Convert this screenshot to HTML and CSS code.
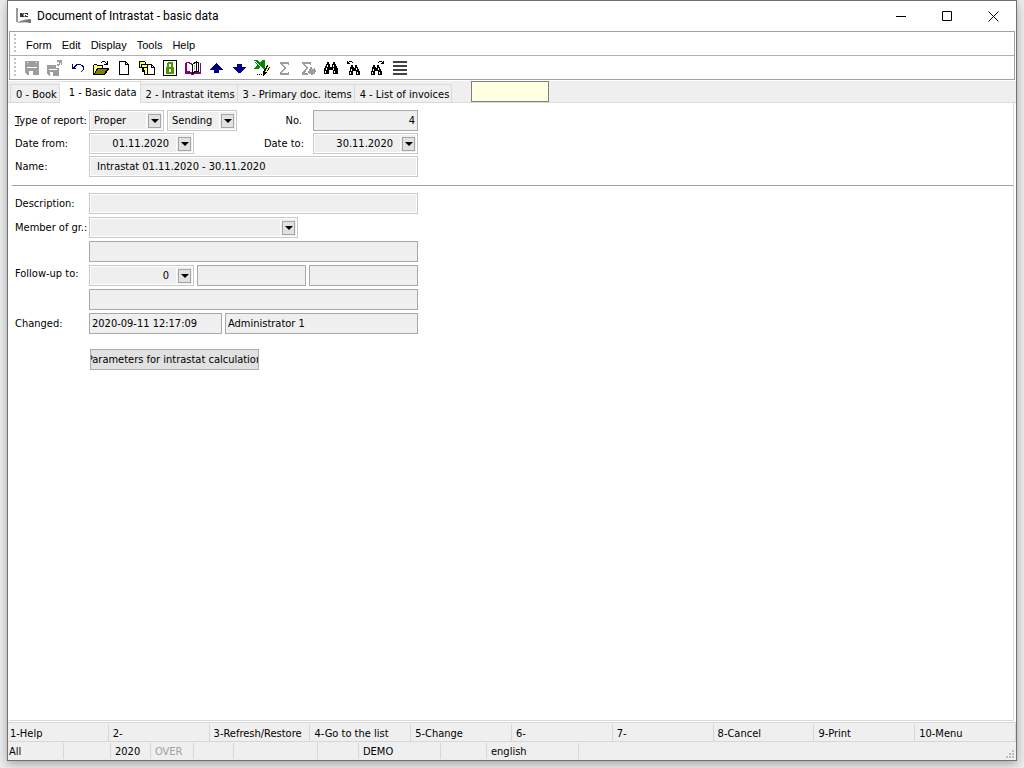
FILE: index.html
```html
<!DOCTYPE html>
<html lang="en">
<head>
<meta charset="utf-8">
<title>Document of Intrastat - basic data</title>
<link rel="stylesheet" href="styles.css">
</head>
<body>
<main class="window">
  <header class="titlebar">
    <svg class="app-icon" width="16" height="16" viewBox="0 0 16 16" aria-hidden="true">
      <defs><linearGradient id="shade" x1="0" y1="0" x2="1" y2="1"><stop offset="0" stop-color="#aaa"/><stop offset="1" stop-color="#555"/></linearGradient></defs>
      <path d="M0 0h2v14H0z" fill="#9a9a9a"/><path d="M1 15c4-3 9-4 14-4v4c-4-1-9-1-14 0z" fill="url(#shade)"/>
      <path d="M4 5h2v4H4zM7 5h2L7 7l2 2H7L5 7zM9 5h3v2h-2v1h2v1H9V7h2V6H9z" fill="#333"/>
    </svg>
    <h1 class="title">Document of Intrastat - basic data</h1>
    <div class="window-buttons">
      <button type="button" class="window-button" aria-label="Minimize"><svg width="11" height="11" viewBox="0 0 11 11"><path d="M0 5.500h10" stroke="#000" fill="none"/></svg></button>
      <button type="button" class="window-button" aria-label="Maximize"><svg width="11" height="11" viewBox="0 0 11 11"><path d="M.5.5h9v9h-9z" stroke="#000" fill="none"/></svg></button>
      <button type="button" class="window-button" aria-label="Close"><svg width="11" height="11" viewBox="0 0 11 11"><path d="M.5.5l10 10M10.500.5l-10 10" stroke="#000" fill="none"/></svg></button>
    </div>
  </header>

  <div class="bars">
    <nav class="menubar">
      <span class="grip"></span>
      <button type="button" class="menu">Form</button>
      <button type="button" class="menu">Edit</button>
      <button type="button" class="menu">Display</button>
      <button type="button" class="menu">Tools</button>
      <button type="button" class="menu">Help</button>
    </nav>
    <div class="toolbar">
      <span class="grip"></span>
      <button type="button" class="tool" aria-label="Save"><svg viewBox="0 0 16 16"><path d="M1 1h14v14H3l-2-2z" fill="#9d9d9d"/><path d="M3 7h10v1H3zM5 11h7v4H5zM3 2h1v1H3zM12 2h1v1h-1z" fill="#fff"/><path d="M9 11h3v4H9z" fill="#9d9d9d"/></svg></button>
      <button type="button" class="tool" aria-label="Save and close"><svg viewBox="0 0 16 16"><path d="M0 5h9v3h3v8H2l-2-2z" fill="#9d9d9d"/><path d="M2 9h8v1H2zM3 12h6v4H3z" fill="#fff"/><path d="M6 12h3v4H6z" fill="#9d9d9d"/><path d="M10 0h5v5h-1V3h-1v2h-1v1h-2V4h2V2h-2z" fill="#9d9d9d"/></svg></button>
      <button type="button" class="tool" aria-label="Undo"><svg viewBox="0 0 16 16"><path d="M2 4h1v3h1V6h1V5h1V4h5v1h2v1h1v4h-1v1h-1v1h-1v-1h1v-1h1V7h-1V6h-1V5H7v1H6v1H5v1h1v1H2z" fill="#000080"/></svg></button>
      <button type="button" class="tool" aria-label="Open"><svg viewBox="0 0 16 16"><path d="M0 5h1V4h3v1h6v3h6v1l-4 6H0z" fill="#000"/><path d="M1 5h3v1h5v2H4v1H3v2H2v2H1z" fill="#ffff66"/><path d="M5 9h9l-3 5H2z" fill="#808000"/><path d="M9 1h3v1h1v1h1V1h1v4h-4V4h2V3h-1V2H9v1H8V2h1z" fill="#000"/></svg></button>
      <button type="button" class="tool" aria-label="New"><svg viewBox="0 0 16 16"><path d="M3.500 1.500h6l3 3v10h-9zM9.500 1.500v3h3" fill="#fff" stroke="#000"/></svg></button>
      <button type="button" class="tool" aria-label="Copy"><svg viewBox="0 0 16 16"><path d="M.5 1.500h5l1 1v5h-6z" fill="#ffff66" stroke="#000"/><path d="M2.500 4.500h5l2 2v5h-6v-4h-1z" fill="#ffff66" stroke="#000"/><path d="M4.500 7.500h4v7h-3v-4h-1z" fill="#ffff66" stroke="#000"/><path d="M8.500 4.500h4l3 3v7h-7zM12.500 4.500v3h3" fill="#fff" stroke="#000"/></svg></button>
      <button type="button" class="tool" aria-label="Lock"><svg viewBox="0 0 16 16"><path d="M1.500.5h13v15h-13z" fill="#fff" stroke="#000"/><path d="M4 7h1V3l1-1h4l1 1v4h1v7H4z" fill="#4f9600"/><path d="M7 4h2v3H7zM7 9h2v3H7z" fill="#fff"/></svg></button>
      <button type="button" class="tool" aria-label="Book"><svg viewBox="0 0 16 16"><path d="M0 3h1v9h5v1h3v-1h6V3h1v11H9v1H6v-1H0z" fill="#800080"/><path d="M1.500 2.500h2l4 2v9l-3-2h-3z" fill="#fff" stroke="#800080"/><path d="M7.500 4.500l4-3v9l-4 3z" fill="#fff" stroke="#000"/><path d="M11.500 2.500h2v9h-2z" fill="#fff" stroke="#000"/><path d="M9 5h1v5H9z" fill="#b9b9b9"/></svg></button>
      <button type="button" class="tool" aria-label="Previous"><svg viewBox="0 0 16 16"><path d="M8 3l7 6v1h-4v3H6v-3H2V9z" fill="#000080"/></svg></button>
      <button type="button" class="tool" aria-label="Next"><svg viewBox="0 0 16 16"><path d="M6 4h5v3h4v1l-6 5H8L2 8V7h4z" fill="#000080"/></svg></button>
      <button type="button" class="tool" aria-label="Export to sheet"><svg viewBox="0 0 16 16"><path d="M0 0h4l2 3 2-3h3v9H8L6 7l-2 2H0l3-4z" fill="#008a00"/><path d="M1 1l8 8" stroke="#fff"/><path d="M9 12l4-7 3 2-4 7-3 2z" fill="#000"/><path d="M11 12l3-6 1 1-3 6z" fill="#ffff33"/><path d="M3 14h1v1H3zM5 14h1v1H5zM7 14h1v1H7z" fill="#000"/></svg></button>
      <button type="button" class="tool" aria-label="Sum"><svg viewBox="0 0 16 16"><path d="M3 2h9v3h-1V4H6l3 4-4 5h6v-1h1v3H3v-2l4-5-4-5z" fill="#9d9d9d"/></svg></button>
      <button type="button" class="tool" aria-label="Sum settings"><svg viewBox="0 0 16 16"><path d="M2 2h9v3h-1V4H5l3 4-3 5h3v2H2v-2l4-5-4-5zM10 7h2v2h2V8h1v2h1v2h-1v2h-2v1h-2v-1H9v-1H8v-2h1V9h1z" fill="#9d9d9d"/></svg></button>
      <button type="button" class="tool" aria-label="Find"><svg viewBox="0 0 16 16"><path d="M4 2h2v2h1v3h2V4h1V2h2v2h1v2h1v2h1v6h-5v-4H6v4H1V8h1V6h1V4h1z" fill="#000"/><path d="M4 5h1v2H4zM3 8h1v2H3zM2 11h1v2H2zM10 5h1v2h-1zM10 8h1v2h-1zM11 11h1v2h-1z" fill="#fff"/></svg></button>
      <button type="button" class="tool" aria-label="Find previous"><svg viewBox="0 0 16 16"><path d="M1 1h1v1h1V1h3v1h1v1H6V2H3v1h1v1H1zM5 5h2v2h1v1h1V5h2v2h1v2h1v2h1v4h-4v-4H7v4H3v-4h1V7h1z" fill="#000"/><path d="M5 9h1v2H5zM4 12h1v2H4zM10 8h1v2h-1zM11 12h1v2h-1z" fill="#fff"/></svg></button>
      <button type="button" class="tool" aria-label="Find next"><svg viewBox="0 0 16 16"><path d="M15 1h-1v1h-1V1h-3v1H9v1h1V2h3v1h-1v1h3zM4 5h2v2h1v1h1V5h2v2h1v2h1v2h1v4H9v-4H6v4H2v-4h1V7h1z" fill="#000"/><path d="M4 9h1v2H4zM3 12h1v2H3zM9 8h1v2H9zM10 12h1v2h-1z" fill="#fff"/></svg></button>
      <button type="button" class="tool" aria-label="List"><svg viewBox="0 0 16 16"><path d="M1 1h14v2H1zM1 5h14v2H1zM1 9h14v2H1zM1 13h14v2H1z" fill="#404040"/></svg></button>
    </div>
  </div>

  <div class="tabs">
    <button type="button" class="tab">0 - Book</button>
    <button type="button" class="tab tab-active">1 - Basic data</button>
    <button type="button" class="tab">2 - Intrastat items</button>
    <button type="button" class="tab">3 - Primary doc. items</button>
    <button type="button" class="tab">4 - List of invoices</button>
    <input class="quick" type="text" aria-label="Quick search">
  </div>

  <section class="page">
    <form class="form form-head">
      <div class="row">
        <label class="label" for="type"><u>T</u>ype of report:</label>
        <div class="fields">
          <div class="combo w-type"><select id="type"><option>Proper</option></select><span class="arrow"></span></div>
          <div class="combo w-direction"><select aria-label="Direction"><option>Sending</option></select><span class="arrow"></span></div>
          <label class="label-right label-no" for="number">No.</label>
          <input class="box box-dark number w-date" id="number" type="text" value="4" readonly>
        </div>
      </div>
      <div class="row">
        <label class="label" for="from">Date from:</label>
        <div class="fields">
          <div class="combo w-date"><input class="number" id="from" type="text" value="01.11.2020"><button type="button" class="arrow" aria-label="Pick start date"></button></div>
          <label class="label-right" for="to">Date to:</label>
          <div class="combo w-date"><input class="number" id="to" type="text" value="30.11.2020"><button type="button" class="arrow" aria-label="Pick end date"></button></div>
        </div>
      </div>
      <div class="row">
        <label class="label" for="name">Name:</label>
        <div class="fields"><input class="box indent" id="name" type="text" value="Intrastat 01.11.2020 - 30.11.2020"></div>
      </div>
    </form>
    <hr class="rule">
    <form class="form form-body">
      <div class="row">
        <label class="label" for="description">Description:</label>
        <div class="fields"><input class="box" id="description" type="text"></div>
      </div>
      <div class="row">
        <label class="label" for="member">Member of gr.:</label>
        <div class="fields"><div class="combo w-member"><select id="member"><option></option></select><span class="arrow"></span></div></div>
      </div>
      <div class="row">
        <span></span>
        <div class="fields"><input class="box box-dark" type="text" aria-label="Group name" readonly></div>
      </div>
      <div class="row">
        <label class="label label-up" for="follow">Follow-up to:</label>
        <div class="fields">
          <div class="combo w-date"><input class="number" id="follow" type="text" value="0"><button type="button" class="arrow" aria-label="Pick document"></button></div>
          <input class="box box-dark" type="text" aria-label="Follow-up from" readonly>
          <input class="box box-dark" type="text" aria-label="Follow-up until" readonly>
        </div>
      </div>
      <div class="row">
        <span></span>
        <div class="fields"><input class="box box-dark" type="text" aria-label="Follow-up name" readonly></div>
      </div>
      <div class="row">
        <label class="label" for="changed">Changed:</label>
        <div class="fields">
          <input class="box box-dark w-changed" id="changed" type="text" value="2020-09-11 12:17:09" readonly>
          <input class="box box-dark" type="text" value="Administrator 1" aria-label="Changed by" readonly>
        </div>
      </div>
      <button type="button" class="action"><span>Parameters for intrastat calculation</span></button>
    </form>
  </section>

  <nav class="keys">
    <button type="button" class="key">1-Help</button>
    <button type="button" class="key">2-</button>
    <button type="button" class="key">3-Refresh/Restore</button>
    <button type="button" class="key">4-Go to the list</button>
    <button type="button" class="key">5-Change</button>
    <button type="button" class="key">6-</button>
    <button type="button" class="key">7-</button>
    <button type="button" class="key">8-Cancel</button>
    <button type="button" class="key">9-Print</button>
    <button type="button" class="key">10-Menu</button>
  </nav>
  <footer class="status">
    <span>All</span><span></span><span>2020</span><span class="muted">OVER</span><span></span><span></span><span></span><span>DEMO</span><span></span><span>english</span>
    <svg class="size-grip" width="9" height="9" viewBox="0 0 9 9" aria-hidden="true"><path d="M6 0h2v2H6zM3 3h2v2H3zM6 3h2v2H6zM0 6h2v2H0zM3 6h2v2H3zM6 6h2v2H6z" fill="#bdbdbd"/></svg>
  </footer>
</main>
</body>
</html>
```
FILE: styles.css
```css
* { box-sizing: border-box; }

body {
  margin: 0;
  padding: 0 7px 7px;
  height: 100vh;
  background: #ececec;
  overflow: hidden;
  font-family: "DejaVu Sans Condensed", "DejaVu Sans", sans-serif;
  font-stretch: condensed;
  font-size: 11px;
  line-height: 14px;
  color: #000;
}

button, input, select {
  margin: 0;
  padding: 0;
  border: 0;
  border-radius: 0;
  background: none;
  font: inherit;
  color: inherit;
  white-space: nowrap;
}

.window {
  display: flex;
  flex-direction: column;
  height: 100%;
  border: 1px solid #707070;
  background: #fff;
  box-shadow: 0 3px 9px rgba(0, 0, 0, .3);
}

.titlebar {
  display: flex;
  align-items: center;
  height: 30px;
  padding-left: 8px;
}

.title {
  margin: 0 auto 0 5px;
  font: 12px/16px Roboto, "Open Sans", sans-serif;
}

.window-buttons { display: flex; }

.window-button {
  display: grid;
  place-items: center;
  width: 46px;
  height: 30px;
}

.bars {
  margin: 0 1px;
  border: 1px solid #a0a0a0;
}

.menubar, .toolbar {
  display: flex;
  align-items: center;
  height: 24px;
  padding-left: 4px;
}

.menubar {
  font-family: "Liberation Sans", Arial, sans-serif;
  font-size: 11px;
  border-bottom: 1px solid #b0b0b0;
}

.toolbar { height: 23px; }

.grip {
  width: 2px;
  height: 20px;
  margin-right: 5px;
  background: repeating-linear-gradient(#c4c4c4 0 2px, #fff 2px 4px);
}

.menu { padding: 2px 5px 0; }

.tool {
  width: 23px;
  height: 22px;
  display: grid;
  place-items: center;
}

.toolbar .grip { margin-right: 4px; }

.tool svg {
  width: 16px;
  height: 16px;
  shape-rendering: crispEdges;
}

.tabs {
  display: flex;
  align-items: flex-end;
  height: 22px;
  margin-top: 1px;
  padding-left: 2px;
  background: #efefef;
  box-shadow: inset 0 -1px #dadada;
}

.tab {
  height: 19px;
  padding: 2px 2px 0 5px;
  border: 1px solid #dadada;
  border-left: 0;
}

.tab:first-child { border-left: 1px solid #dadada; }

.tab-active {
  height: 22px;
  padding: 0 3px 0 9px;
  border-bottom: 0;
  background: #fff;
}

.quick {
  width: 78px;
  height: 21px;
  margin: 0 0 1px 19px;
  border: 1px solid #808080;
  background: #ffffe1;
}

.page {
  flex: 1;
  min-height: 0;
  margin: 0 2px 1px 1px;
  border: 1px solid #dadada;
  border-width: 0 1px 1px 0;
}

.form {
  display: grid;
  width: 409px;
  padding-left: 6px;
}

.form-head { gap: 2px; padding-top: 7px; }
.form-body { gap: 3px; padding-top: 7px; }

.row {
  display: grid;
  grid-template-columns: 74px 329px;
  height: 21px;
}

.label { padding-top: 4px; white-space: nowrap; }
.label-up { padding-top: 2px; }
.label-right { margin-left: auto; padding: 4px 6px 0 0; }

.fields { display: flex; gap: 3px; }

.box {
  flex: 1 1 0;
  min-width: 0;
  height: 21px;
  padding: 0 2px;
  border: 1px solid #c8c8c8;
  background: #efefef;
  box-shadow: inset 0 0 0 1px #fff;
}

.box-dark { border-color: #a7a9ad; box-shadow: none; }
.indent { padding-left: 7px; }
.number { text-align: right; }

.combo {
  position: relative;
  height: 21px;
  border: 1px solid #c8c8c8;
  background: #efefef;
  box-shadow: inset 0 0 0 1px #fff;
}

.combo select, .combo input {
  display: block;
  width: 100%;
  height: 19px;
  padding: 0 24px 0 4px;
  appearance: none;
}

.combo::before {
  content: "";
  position: absolute;
  top: 1px;
  bottom: 1px;
  right: 16px;
  width: 1px;
  background: #fff;
}

.arrow {
  position: absolute;
  top: 3px;
  right: 2px;
  width: 13px;
  height: 14px;
  border: 1px solid #a5a5a5;
  background: #e1e1e1;
  pointer-events: none;
}

.arrow::after {
  content: "";
  position: absolute;
  top: 4px;
  left: 2px;
  border: 4px solid transparent;
  border-width: 4px 4px 0;
  border-top-color: #000;
}

.w-type { width: 75px; }
.w-direction { width: 70px; }
.w-date { flex: none; width: 105px; }
.w-member { width: 209px; }
.w-changed { flex: none; width: 133px; }
.label-no { padding-right: 8px; }

.rule {
  height: 1px;
  margin: 8px 0 0 3px;
  border: 0;
  background: #a0a0a0;
}

.action {
  display: flex;
  justify-content: center;
  align-items: center;
  width: 169px;
  height: 21px;
  margin: 12px 0 0 75px;
  border: 1px solid #adadad;
  background: #e1e1e1;
}

.action span {
  display: flex;
  justify-content: center;
  width: 100%;
  overflow: hidden;
}

.keys {
  display: grid;
  grid-template-columns: repeat(10, 1fr);
  height: 20px;
  padding-top: 1px;
  border: 1px solid #d7d7d7;
  border-width: 1px 0;
  background: #efefef;
}

.key {
  padding: 3px 0 0 4px;
  border-right: 1px solid #d7d7d7;
  text-align: left;
}

.key:first-child { padding-left: 2px; }

.status {
  display: grid;
  grid-template-columns: 56px 47px 40px 43px 40px 84px 41px 82px 46px 92px 1fr;
  height: 18px;
  padding: 1px 0;
  background: #efefef;
}

.status span {
  padding: 2px 0 0 4px;
  border-right: 1px solid #d7d7d7;
}

.status span:first-child { padding-left: 1px; }
.status .muted { color: #a0a0a0; }

.size-grip { place-self: end; margin-right: 1px; }
```
